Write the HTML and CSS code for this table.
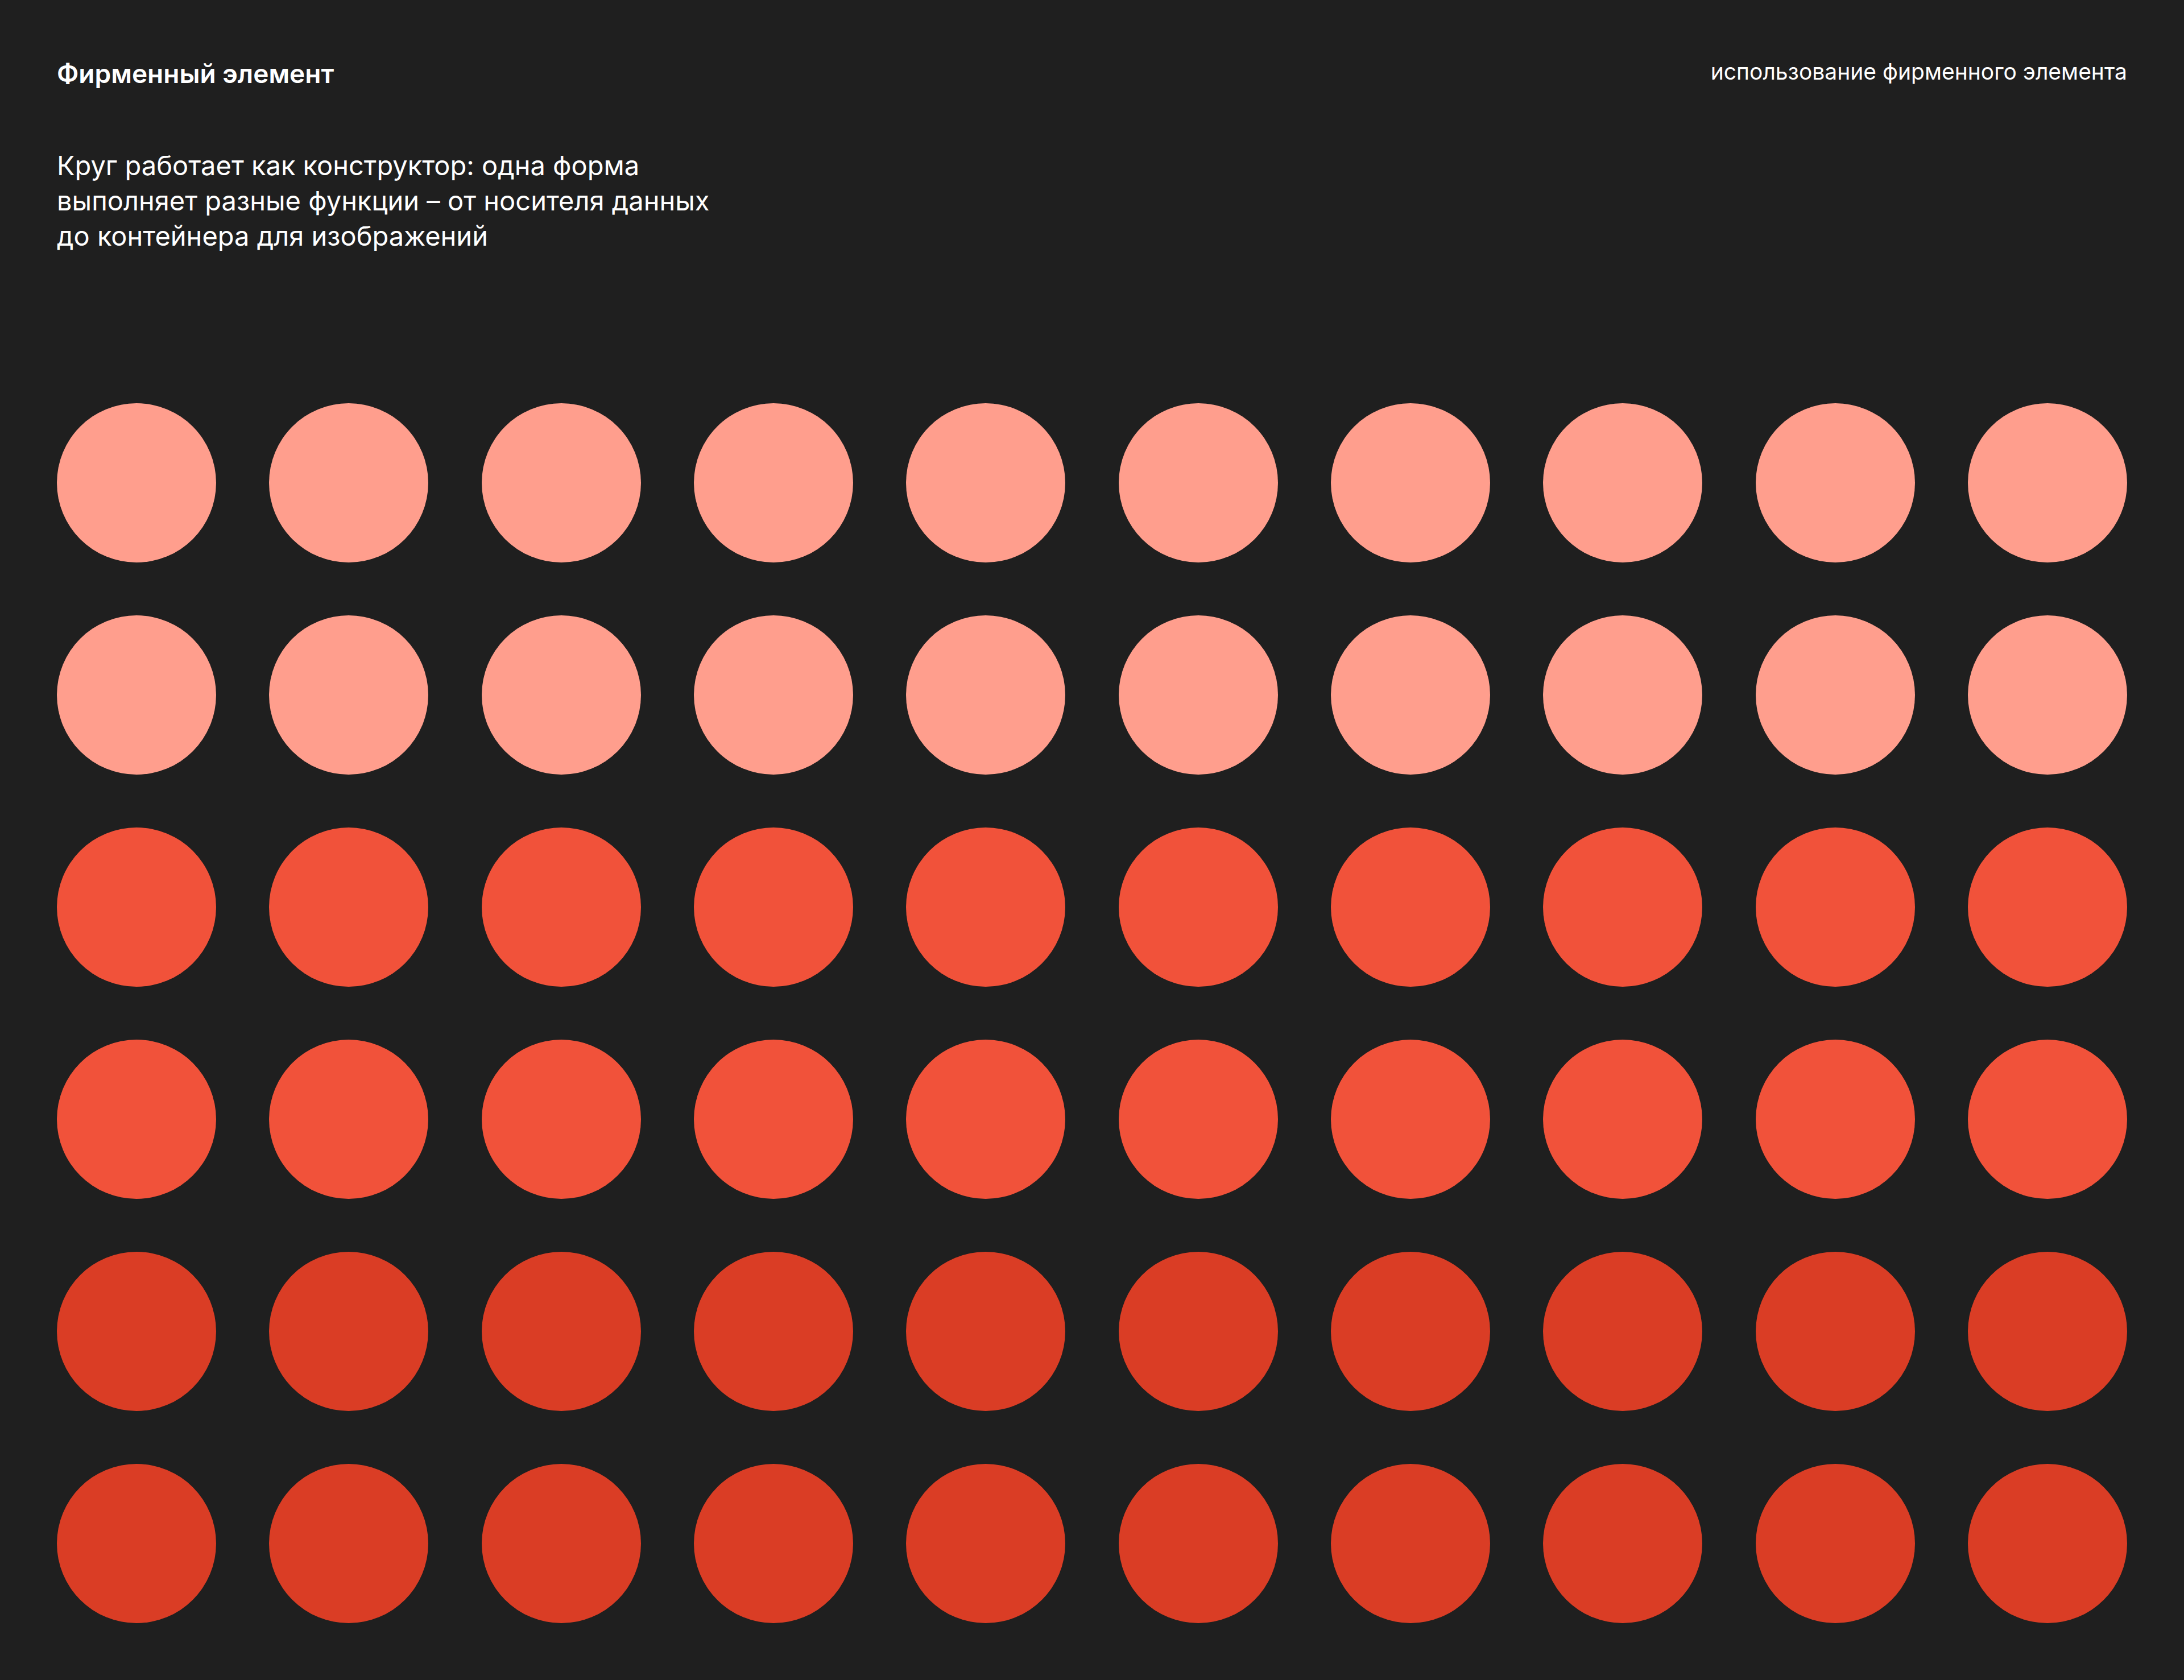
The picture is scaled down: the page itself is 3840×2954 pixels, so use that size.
FILE: index.html
```html
<!DOCTYPE html>
<html lang="ru">
<head>
<meta charset="utf-8">
<title>Фирменный элемент</title>
<link rel="stylesheet" href="styles.css">
</head>
<body>
<main class="page">
  <header class="header">
    <h1 class="title">Фирменный элемент</h1>
    <p class="section">использование фирменного элемента</p>
  </header>
  <p class="lead">Круг работает как конструктор: одна форма<br>выполняет разные функции – от носителя данных<br>до контейнера для изображений</p>
  <section class="grid">
    <div class="dot light"></div><div class="dot light"></div><div class="dot light"></div><div class="dot light"></div><div class="dot light"></div><div class="dot light"></div><div class="dot light"></div><div class="dot light"></div><div class="dot light"></div><div class="dot light"></div>
    <div class="dot light"></div><div class="dot light"></div><div class="dot light"></div><div class="dot light"></div><div class="dot light"></div><div class="dot light"></div><div class="dot light"></div><div class="dot light"></div><div class="dot light"></div><div class="dot light"></div>
    <div class="dot mid"></div><div class="dot mid"></div><div class="dot mid"></div><div class="dot mid"></div><div class="dot mid"></div><div class="dot mid"></div><div class="dot mid"></div><div class="dot mid"></div><div class="dot mid"></div><div class="dot mid"></div>
    <div class="dot mid"></div><div class="dot mid"></div><div class="dot mid"></div><div class="dot mid"></div><div class="dot mid"></div><div class="dot mid"></div><div class="dot mid"></div><div class="dot mid"></div><div class="dot mid"></div><div class="dot mid"></div>
    <div class="dot dark"></div><div class="dot dark"></div><div class="dot dark"></div><div class="dot dark"></div><div class="dot dark"></div><div class="dot dark"></div><div class="dot dark"></div><div class="dot dark"></div><div class="dot dark"></div><div class="dot dark"></div>
    <div class="dot dark"></div><div class="dot dark"></div><div class="dot dark"></div><div class="dot dark"></div><div class="dot dark"></div><div class="dot dark"></div><div class="dot dark"></div><div class="dot dark"></div><div class="dot dark"></div><div class="dot dark"></div>
  </section>
</main>
</body>
</html>
```

FILE: styles.css
```css
html, body {
  margin: 0;
  padding: 0;
  background: #1f1f1f;
}

.page {
  box-sizing: border-box;
  width: 3840px;
  height: 2954px;
  padding: 100px 100px 100px;
  font-family: Inter, "Noto Sans", sans-serif;
  color: #ffffff;
  display: flex;
  flex-direction: column;
}

.header {
  display: flex;
  justify-content: space-between;
  align-items: flex-start;
}

.title {
  margin: 0;
  font-size: 46px;
  line-height: 58px;
  font-weight: 600;
}

.section {
  margin: 0;
  font-size: 39px;
  line-height: 52px;
  font-weight: 400;
}

.lead {
  margin: 102px 0 0;
  font-size: 47px;
  line-height: 62px;
  font-weight: 400;
}

.grid {
  margin-top: auto;
  display: grid;
  grid-template-columns: repeat(10, 280px);
  grid-auto-rows: 280px;
  justify-content: space-between;
  row-gap: 93px;
}

.dot {
  width: 280px;
  height: 280px;
  border-radius: 50%;
}

.light { background: #ff9e8d; }
.mid { background: #f1523a; }
.dark { background: #da3d25; }
```
